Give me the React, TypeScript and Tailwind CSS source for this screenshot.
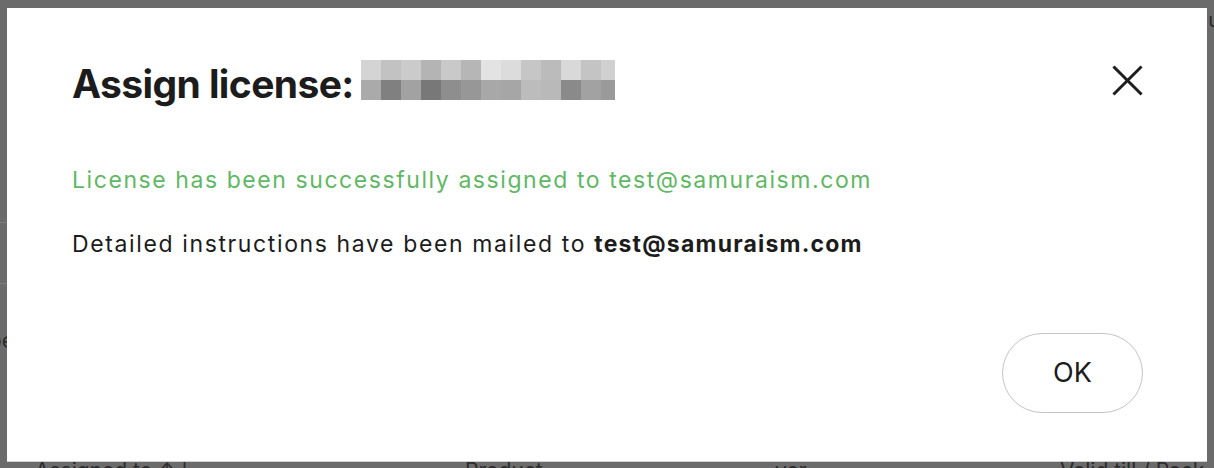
import React from 'react';

const topRow = [
  'bg-[#d4d4d4]', 'bg-[#c2c2c2]', 'bg-[#cbcbcb]', 'bg-[#b4b4b4]', 'bg-[#c9c9c9]', 'bg-[#b6b6b6]', 'bg-[#e3e3e3]',
  'bg-[#dcdcdc]', 'bg-[#c6c6c6]', 'bg-[#bbbbbb]', 'bg-[#d9d9d9]', 'bg-[#c4c4c4]', 'bg-[#d0d0d0]',
];
const bottomRow = [
  'bg-[#aaaaaa]', 'bg-[#808080]', 'bg-[#a2a2a2]', 'bg-[#787878]', 'bg-[#8e8e8e]', 'bg-[#979797]', 'bg-[#a8a8a8]',
  'bg-[#a6a6a6]', 'bg-[#bcbcbc]', 'bg-[#b9b9b9]', 'bg-[#8a8a8a]', 'bg-[#a2a2a2]', 'bg-[#9a9a9a]',
];

// blurred-out customer name next to the title
function Redacted() {
  return (
    <div className="grid grid-cols-[repeat(12,20px)_14px] grid-rows-[20px_20px] ml-[7px]">
      {topRow.map((c, i) => (
        <div key={'t' + i} className={c} />
      ))}
      {bottomRow.map((c, i) => (
        <div key={'b' + i} className={c} />
      ))}
    </div>
  );
}

export default function App() {
  const email = 'test@samuraism.com';

  return (
    <div className="relative h-[468px] w-[1214px] overflow-hidden bg-[#6b6b6b] font-['Inter','Liberation_Sans',sans-serif]">
      {/* page behind the overlay */}
      <div className="flex h-full flex-col text-[#2c2c2c]">
        <div className="flex h-[40px] justify-end pt-[10px] text-[20px] leading-none">
          <span className="-mr-[6px]">Menu</span>
        </div>
        <div className="mt-[182px] h-px w-[40px] bg-[#7a7a7a]" />
        <div className="mt-[60px] h-px w-[40px] bg-[#7a7a7a]" />
        <div className="mt-[40px] -ml-[37px] text-[22px]">Type</div>
        <div className="mt-auto flex h-[8px] items-start text-[21px] leading-none">
          <span className="ml-[35px] w-[430px]">Assigned to ↑↓</span>
          <span className="w-[310px]">Product −</span>
          <span className="w-[285px]">ver</span>
          <span>Valid till / Pack</span>
        </div>
      </div>

      {/* modal */}
      <div className="absolute left-[7px] top-[8px] flex h-[453px] w-[1200px] flex-col bg-white pl-[65px] pr-[64px] pb-[48px] pt-[52px] shadow-[0_1px_0_#d0d0d0]">
        <div className="flex items-start justify-between">
          <div className="flex items-start">
            <h1 className="text-[39px] font-bold leading-[48px] tracking-[-0.6px] text-[#1c1c1c]">Assign license:</h1>
            <Redacted />
          </div>
          <button className="mt-[5px] text-[#1e1e1e]" aria-label="Close">
            <svg width="31" height="31" viewBox="0 0 31 31" fill="none" stroke="currentColor" strokeWidth="3" strokeLinecap="square">
              <line x1="2.5" y1="2.5" x2="28.5" y2="28.5" />
              <line x1="28.5" y1="2.5" x2="2.5" y2="28.5" />
            </svg>
          </button>
        </div>

        <p className="mt-[56px] text-[23px] leading-[33px] tracking-[1.57px] text-[#60b864]">
          License has been successfully assigned to {email}
        </p>
        <p className="mt-[31px] text-[23px] leading-[33px] tracking-[1.62px] text-[#1c1c1c]">
          Detailed instructions have been mailed to <span className="font-bold tracking-[1.2px]">{email}</span>
        </p>

        <div className="mt-auto flex justify-end">
          <button className="h-[80px] w-[141px] rounded-full border-[1.5px] border-[#c4c4c4] text-[27px] text-[#1c1c1c]">
            OK
          </button>
        </div>
      </div>
    </div>
  );
}
